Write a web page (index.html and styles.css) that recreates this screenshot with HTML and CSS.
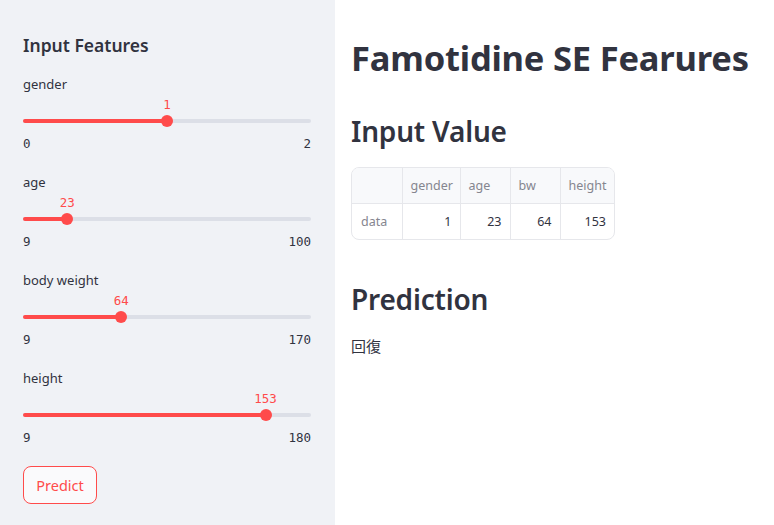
FILE: index.html
```html
<!DOCTYPE html>
<html>
<head>
<meta charset="utf-8">
<link rel="stylesheet" href="styles.css">
</head>
<body>
<div class="app">
  <aside class="sidebar">
    <h2 class="side-title">Input Features</h2>
    <div class="slider">
      <div class="slider-label">gender</div>
      <div class="slider-body">
        <div class="track"><div class="fill" style="width:50%"></div>
          <div class="thumb" style="left:50%"><span class="thumb-value">1</span></div>
        </div>
      </div>
      <div class="ticks"><span>0</span><span>2</span></div>
    </div>
    <div class="slider">
      <div class="slider-label">age</div>
      <div class="slider-body">
        <div class="track"><div class="fill" style="width:15.38%"></div>
          <div class="thumb" style="left:15.38%"><span class="thumb-value">23</span></div>
        </div>
      </div>
      <div class="ticks"><span>9</span><span>100</span></div>
    </div>
    <div class="slider">
      <div class="slider-label">body weight</div>
      <div class="slider-body">
        <div class="track"><div class="fill" style="width:34.16%"></div>
          <div class="thumb" style="left:34.16%"><span class="thumb-value">64</span></div>
        </div>
      </div>
      <div class="ticks"><span>9</span><span>170</span></div>
    </div>
    <div class="slider">
      <div class="slider-label">height</div>
      <div class="slider-body">
        <div class="track"><div class="fill" style="width:84.21%"></div>
          <div class="thumb" style="left:84.21%"><span class="thumb-value">153</span></div>
        </div>
      </div>
      <div class="ticks"><span>9</span><span>180</span></div>
    </div>
    <button class="btn">Predict</button>
  </aside>
  <main class="main">
    <h1 class="title">Famotidine SE Fearures</h1>
    <h2 class="subhead">Input Value</h2>
    <div class="table-wrap">
      <table class="grid">
        <thead>
          <tr><th class="c-idx"></th><th class="c-g">gender</th><th class="c-a">age</th><th class="c-b">bw</th><th class="c-h">height</th></tr>
        </thead>
        <tbody>
          <tr><td class="idx">data</td><td class="num">1</td><td class="num">23</td><td class="num">64</td><td class="num">153</td></tr>
        </tbody>
      </table>
    </div>
    <h2 class="subhead pred">Prediction</h2>
    <p class="result">回復</p>
  </main>
</div>
</body>
</html>
```

FILE: styles.css
```css
* { box-sizing: border-box; }
html, body { margin: 0; padding: 0; }
body {
  font-family: "Noto Sans", "Noto Sans CJK JP", sans-serif;
  color: #31333f;
  background: #ffffff;
}
.app {
  display: flex;
  min-height: 525px;
}
.sidebar {
  width: 335px;
  flex: 0 0 335px;
  background: #f0f2f6;
  padding: 31px 24px 0 23px;
  min-height: 525px;
}
.side-title {
  margin: 0 0 15px;
  font-size: 17.5px;
  line-height: 28px;
  font-weight: 600;
}
.slider {
  margin-bottom: 19px;
}
.slider-label {
  font-size: 13px;
  line-height: 20px;
  height: 20px;
}
.slider-body {
  height: 34px;
  padding-top: 25px;
}
.track {
  position: relative;
  height: 4px;
  border-radius: 2px;
  background: #dcdfe7;
}
.fill {
  height: 4px;
  border-radius: 2px;
  background: #ff4b4b;
}
.thumb {
  position: absolute;
  top: 50%;
  width: 12px;
  height: 12px;
  margin: -6px 0 0 -6px;
  border-radius: 50%;
  background: #ff4b4b;
}
.thumb-value {
  position: absolute;
  bottom: 14px;
  left: 50%;
  transform: translateX(-50%);
  font-family: "DejaVu Sans Mono", monospace;
  font-size: 12.5px;
  line-height: 16px;
  color: #ff4b4b;
  white-space: nowrap;
}
.ticks {
  display: flex;
  justify-content: space-between;
  font-family: "DejaVu Sans Mono", monospace;
  font-size: 12.5px;
  line-height: 20px;
  height: 25px;
  padding-top: 6px;
  color: #31333f;
}
.btn {
  width: 74px;
  height: 38px;
  border: 1px solid #ff4b4b;
  border-radius: 8px;
  background: #fafafc;
  color: #ff4b4b;
  font-family: "Noto Sans", sans-serif;
  font-size: 14.5px;
  padding: 0;
}
.main {
  flex: 1;
  min-width: 0;
  padding: 36px 0 0 16px;
}
.title {
  margin: 0;
  font-size: 34.5px;
  line-height: 44px;
  font-weight: 700;
  letter-spacing: -0.2px;
  white-space: nowrap;
}
.subhead {
  margin: 31px 0 0;
  font-size: 28px;
  line-height: 40px;
  font-weight: 600;
  letter-spacing: -0.2px;
}
.table-wrap {
  margin-top: 16px;
  display: inline-block;
  border: 1px solid #e6e7eb;
  border-radius: 8px;
  overflow: hidden;
}
.grid {
  border-collapse: collapse;
  table-layout: fixed;
  width: 262px;
  font-size: 12.5px;
}
.grid th, .grid td {
  height: 36px;
  padding: 0 8px;
  border-right: 1px solid #e6e7eb;
  font-weight: 400;
  white-space: nowrap;
  overflow: hidden;
}
.grid th:last-child, .grid td:last-child { border-right: none; }
.grid thead th {
  height: 35px;
  background: #f8f9fb;
  color: #85868f;
  text-align: left;
  border-bottom: 1px solid #e6e7eb;
}
.c-idx { width: 50px; }
.c-g { width: 58px; }
.c-a { width: 50px; }
.c-b { width: 50px; }
.c-h { width: 54px; }
.grid td.idx { color: #85868f; text-align: left; padding-left: 9px; }
.grid td.num { text-align: right; }
.pred { margin-top: 34px; }
.result {
  margin: 15px 0 0;
  font-size: 15px;
  line-height: 24px;
}
```
